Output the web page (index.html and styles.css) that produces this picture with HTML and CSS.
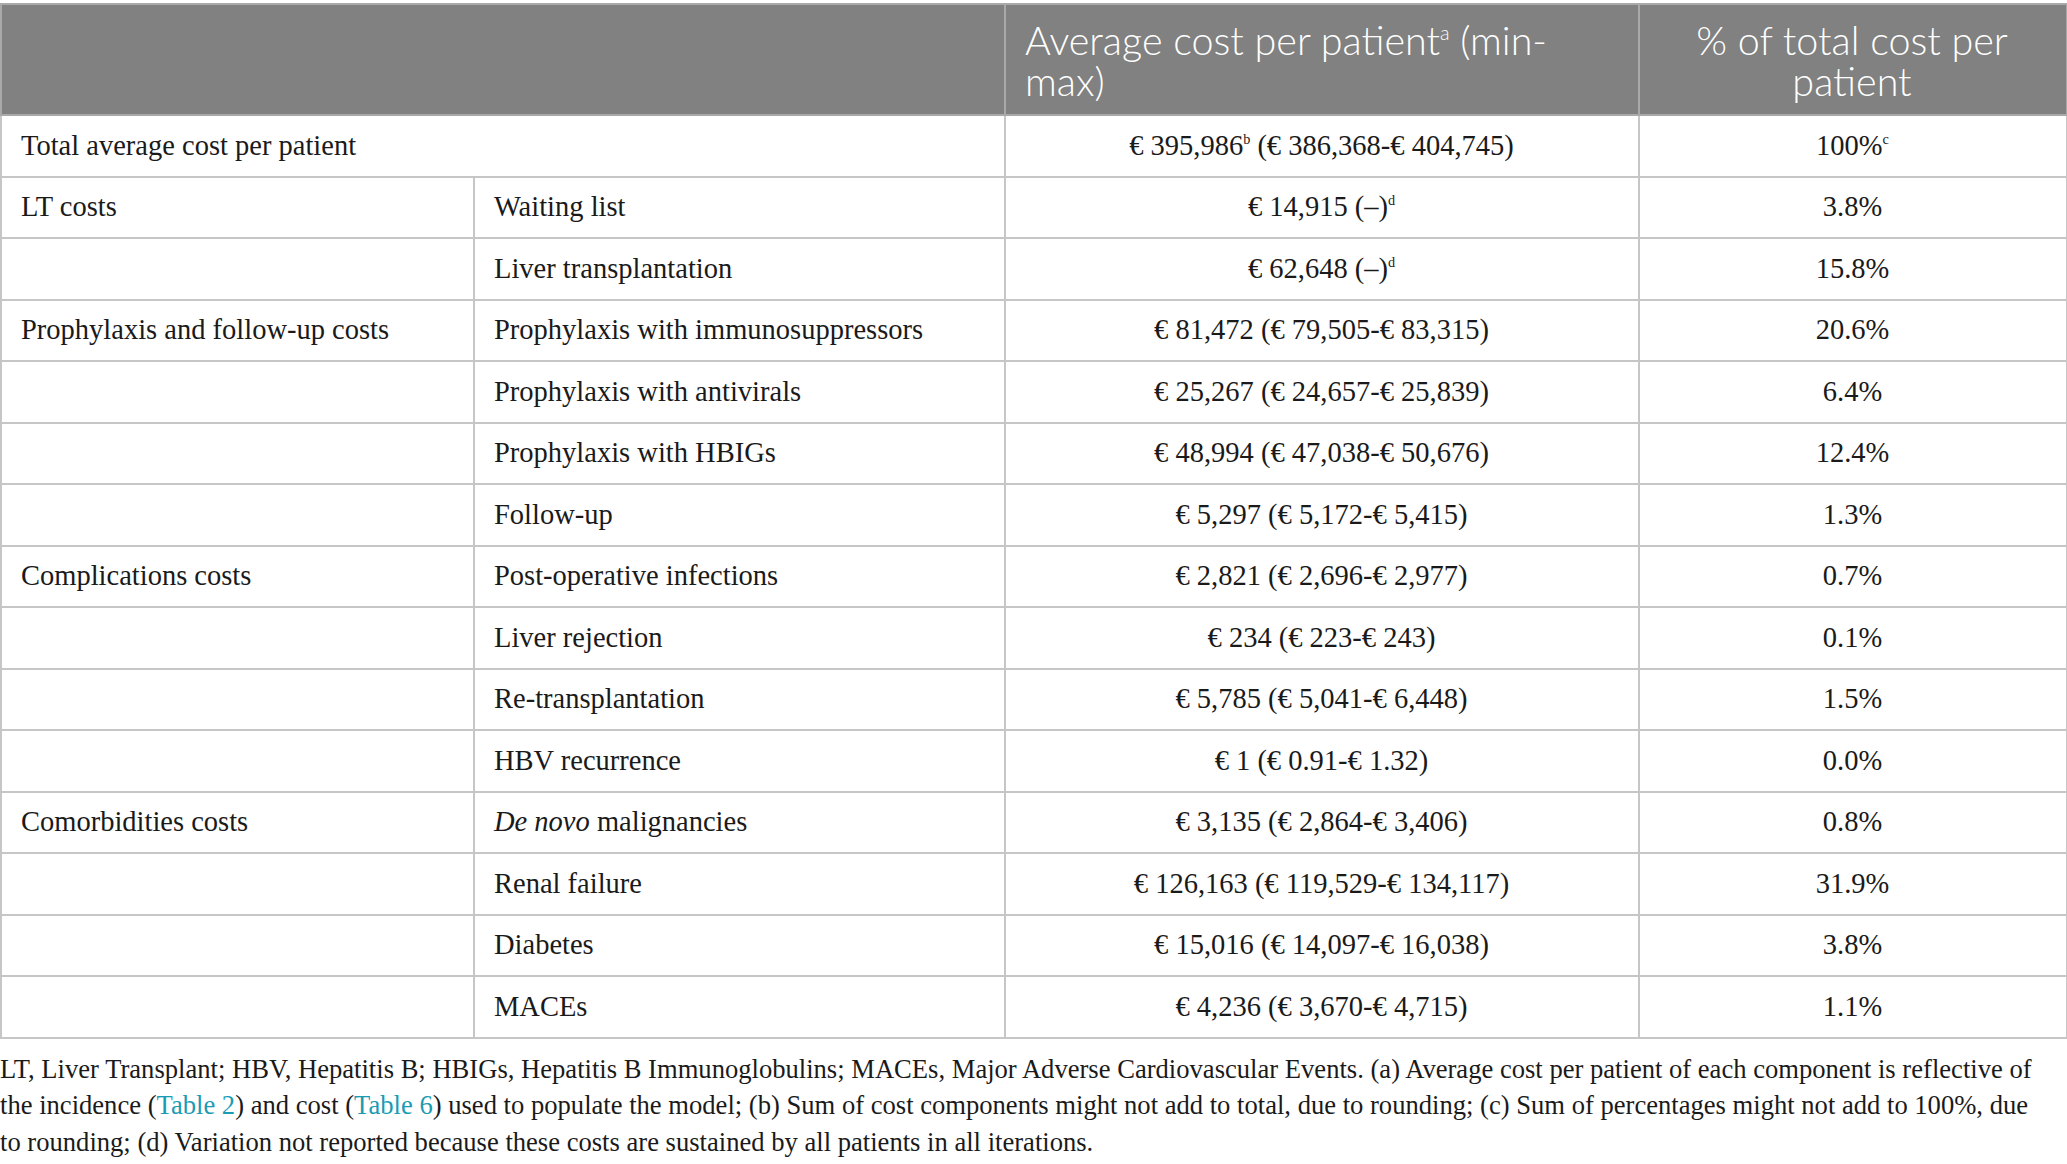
FILE: index.html
```html
<!DOCTYPE html>
<html lang="en">
<head>
<meta charset="utf-8">
<title>Cost table</title>
<link rel="stylesheet" href="styles.css">
</head>
<body>
<div class="page">
<table class="costs">
  <colgroup>
    <col class="c1"><col class="c2"><col class="c3"><col class="c4">
  </colgroup>
  <thead>
    <tr>
      <th colspan="2"></th>
      <th class="h-left">Average cost per patient<sup>a</sup> (min-max)</th>
      <th class="h-center">% of total cost per patient</th>
    </tr>
  </thead>
  <tbody>
    <tr><td colspan="2">Total average cost per patient</td><td class="num">€ 395,986<sup>b</sup> (€ 386,368-€ 404,745)</td><td class="num">100%<sup>c</sup></td></tr>
    <tr><td>LT costs</td><td>Waiting list</td><td class="num">€ 14,915 (–)<sup>d</sup></td><td class="num">3.8%</td></tr>
    <tr><td></td><td>Liver transplantation</td><td class="num">€ 62,648 (–)<sup>d</sup></td><td class="num">15.8%</td></tr>
    <tr><td>Prophylaxis and follow-up costs</td><td>Prophylaxis with immunosuppressors</td><td class="num">€ 81,472 (€ 79,505-€ 83,315)</td><td class="num">20.6%</td></tr>
    <tr><td></td><td>Prophylaxis with antivirals</td><td class="num">€ 25,267 (€ 24,657-€ 25,839)</td><td class="num">6.4%</td></tr>
    <tr><td></td><td>Prophylaxis with HBIGs</td><td class="num">€ 48,994 (€ 47,038-€ 50,676)</td><td class="num">12.4%</td></tr>
    <tr><td></td><td>Follow-up</td><td class="num">€ 5,297 (€ 5,172-€ 5,415)</td><td class="num">1.3%</td></tr>
    <tr><td>Complications costs</td><td>Post-operative infections</td><td class="num">€ 2,821 (€ 2,696-€ 2,977)</td><td class="num">0.7%</td></tr>
    <tr><td></td><td>Liver rejection</td><td class="num">€ 234 (€ 223-€ 243)</td><td class="num">0.1%</td></tr>
    <tr><td></td><td>Re-transplantation</td><td class="num">€ 5,785 (€ 5,041-€ 6,448)</td><td class="num">1.5%</td></tr>
    <tr><td></td><td>HBV recurrence</td><td class="num">€ 1 (€ 0.91-€ 1.32)</td><td class="num">0.0%</td></tr>
    <tr><td>Comorbidities costs</td><td><em>De novo</em> malignancies</td><td class="num">€ 3,135 (€ 2,864-€ 3,406)</td><td class="num">0.8%</td></tr>
    <tr><td></td><td>Renal failure</td><td class="num">€ 126,163 (€ 119,529-€ 134,117)</td><td class="num">31.9%</td></tr>
    <tr><td></td><td>Diabetes</td><td class="num">€ 15,016 (€ 14,097-€ 16,038)</td><td class="num">3.8%</td></tr>
    <tr><td></td><td>MACEs</td><td class="num">€ 4,236 (€ 3,670-€ 4,715)</td><td class="num">1.1%</td></tr>
  </tbody>
</table>
<p class="note">LT, Liver Transplant; HBV, Hepatitis B; HBIGs, Hepatitis B Immunoglobulins; MACEs, Major Adverse Cardiovascular Events. (a) Average cost per patient of each component is reflective of the incidence (<a class="ref" href="#">Table 2</a>) and cost (<a class="ref" href="#">Table 6</a>) used to populate the model; (b) Sum of cost components might not add to total, due to rounding; (c) Sum of percentages might not add to 100%, due to rounding; (d) Variation not reported because these costs are sustained by all patients in all iterations.</p>
</div>
</body>
</html>
```
FILE: styles.css
```css
html, body {
  margin: 0;
  padding: 0;
  background: #ffffff;
}

.page {
  padding: 3px 1px 0 0;
  font-family: "Liberation Serif", "Times New Roman", serif;
  color: #1a1a1a;
}

.costs {
  width: 100%;
  border-collapse: collapse;
  table-layout: fixed;
  border: 2px solid #c6c6c6;
}

.c1 { width: 473px; }
.c2 { width: 531px; }
.c3 { width: 634px; }
.c4 { width: 428px; }

.costs th {
  background: #808180;
  color: #ffffff;
  font-family: Lato, "Open Sans", sans-serif;
  font-weight: 300;
  font-size: 39.5px;
  line-height: 41px;
  height: 82px;
  padding: 14px 21px 13px 19px;
  border: 2px solid #a9a9a9;
  vertical-align: middle;
}

.costs th.h-left { text-align: left; }
.costs th.h-center { text-align: center; }

.costs th sup {
  font-size: 0.5em;
  line-height: 0;
  vertical-align: 0.75em;
}

.costs td {
  font-size: 28.5px;
  line-height: 34px;
  height: 59.5px;
  padding: 0 20px 0 19px;
  border: 2px solid #c6c6c6;
  vertical-align: middle;
  text-align: left;
}

.costs td.num { text-align: center; }

.costs td sup {
  font-size: 0.5em;
  line-height: 0;
  vertical-align: 0.8em;
}

.note {
  margin: 12px 0 0 0;
  padding-right: 25px;
  font-size: 26.6px;
  line-height: 36.5px;
  color: #1a1a1a;
}

.ref {
  color: #1b9bb3;
  text-decoration: none;
}
```
